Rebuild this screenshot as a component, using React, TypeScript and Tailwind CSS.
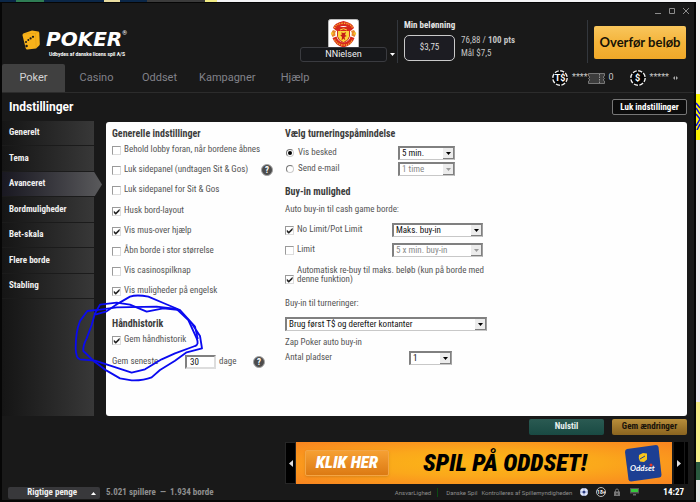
import { ReactNode, useId, useState } from "react";
import { clsx } from "clsx";

const tabs = ["Poker", "Casino", "Oddset", "Kampagner", "Hjælp"];

const sections = [
  "Generelt",
  "Tema",
  "Avanceret",
  "Bordmuligheder",
  "Bet-skala",
  "Flere borde",
  "Stabling",
];

const lobbyOptions = [
  { label: "Behold lobby foran, når bordene åbnes", checked: false },
  { label: "Luk sidepanel (undtagen Sit & Gos)", checked: false, help: true },
  { label: "Luk sidepanel for Sit & Gos", checked: false },
];

const tableOptions = [
  { label: "Husk bord-layout", checked: true },
  { label: "Vis mus-over hjælp", checked: true },
  { label: "Åbn borde i stor størrelse", checked: false },
  { label: "Vis casinospilknap", checked: false },
  { label: "Vis muligheder på engelsk", checked: true },
];

function Checkbox({
  label,
  defaultChecked,
  className,
}: {
  label: string;
  defaultChecked?: boolean;
  className?: string;
}) {
  return (
    <label className={clsx("flex items-center gap-[3px]", className)}>
      <span className="relative size-[9px] shrink-0">
        <input
          type="checkbox"
          defaultChecked={defaultChecked}
          className="peer block size-[9px] appearance-none border border-t-[#9a9a9a] border-r-[#dcdcdc] border-b-[#dcdcdc] border-l-[#9a9a9a] bg-white"
        />
        <svg
          viewBox="0 0 9 9"
          className="pointer-events-none absolute inset-0 hidden size-[9px] peer-checked:block"
        >
          <path d="M1.800 3.800v2.200l2 1.800L7.600 4V1.800L3.800 5.500z" fill="#222" />
        </svg>
      </span>
      <span>{label}</span>
    </label>
  );
}

function Radio({
  label,
  defaultChecked,
}: {
  label: string;
  defaultChecked?: boolean;
}) {
  return (
    <label className="flex items-center gap-1">
      <span className="relative ml-px size-2 shrink-0">
        <input
          type="radio"
          name="reminder"
          defaultChecked={defaultChecked}
          className="peer block size-2 appearance-none rounded-full border border-t-[#777] border-r-[#ccc] border-b-[#ccc] border-l-[#777] bg-white"
        />
        <span className="pointer-events-none absolute inset-[2px] hidden rounded-full bg-black peer-checked:block" />
      </span>
      <span>{label}</span>
    </label>
  );
}

function Select({
  label,
  value,
  disabled,
  className,
}: {
  label: string;
  value: string;
  disabled?: boolean;
  className?: string;
}) {
  return (
    <span
      className={clsx(
        "relative block h-[14px] border-t-2 border-r border-b border-l-2 border-t-[#808080] border-r-[#a0a0a0] border-b-[#c8c8c8] border-l-[#808080] bg-white",
        className,
      )}
    >
      <select
        aria-label={label}
        disabled={disabled}
        className={clsx(
          "block h-full w-full appearance-none pl-[2px] text-[9px] leading-[11px]",
          disabled ? "text-[#8a8a8a]" : "text-[#111]",
        )}
      >
        <option>{value}</option>
      </select>
      <span className="pointer-events-none absolute inset-y-0 right-0 flex w-[11px] items-center justify-center border-r border-b border-[#808080] bg-[#ececec]">
        <svg viewBox="0 0 5 3" className="h-[3px] w-[5px]">
          <path d="M0 0h5L2.500 3z" fill={disabled ? "#999" : "#000"} />
        </svg>
      </span>
    </span>
  );
}

function HelpButton({ className }: { className?: string }) {
  return (
    <button
      type="button"
      aria-label="Hjælp"
      className={clsx(
        "flex size-3 items-center justify-center rounded-full border border-[#a5a5a5] bg-[#4c4c4c] text-[9px] leading-none font-bold text-white",
        className,
      )}
    >
      ?
    </button>
  );
}

function Heading({ children }: { children: ReactNode }) {
  return (
    <h2 className="h-3 text-[10px] leading-3 font-bold text-[#3c3c3c]">
      {children}
    </h2>
  );
}

function Logo() {
  return (
    <div className="flex items-start gap-1.5 pt-[11px] pl-5">
      <svg viewBox="0 0 18 20" className="h-5 w-[18px]">
        <path
          d="M2 3.200 10 .6l6.200.9q1 .2 1.100 1.200l.5 11.300q0 1-.8 1.700l-3 2.700-8.500 1q-1.500.1-1.800-1.200L.5 5.200Q.4 3.800 2 3.200z"
          fill="#f9b31a"
        />
        <path d="m1.500 4 12-.8 3.500-1.200M13.500 3.200l.7 15" stroke="#dd9a12" strokeWidth=".5" fill="none" />
        <g fill="#191919">
          <circle cx="11" cy="6.800" r="1.100" />
          <circle cx="8.600" cy="8.400" r="1.100" />
          <circle cx="6.300" cy="10" r="1" />
          <circle cx="4" cy="12" r="1" />
          <circle cx="4.600" cy="16" r="1.200" />
        </g>
      </svg>
      <div className="text-white">
        <div className="flex items-start">
          <span className="font-['DejaVu_Sans',sans-serif] text-[20px] leading-[18px] font-bold italic">
            POKER
          </span>
          <span className="text-[6px] leading-[6px]">®</span>
        </div>
        <p className="mt-[3px] pl-[3px] text-[5px] leading-[6px] font-bold">
          Udbydes af danske licens spil A/S
        </p>
      </div>
    </div>
  );
}

function Crest() {
  return (
    <svg viewBox="0 0 31 29" className="h-[29px] w-[31px]">
      <rect x=".5" y=".5" width="30" height="30" rx="2" fill="#fff" stroke="#bbb" />
      <path
        d="M5 9Q6 4 15.500 2 25 4 26 9l-3.500 3Q20 7 15.500 7T8.500 12z"
        fill="#d8281c"
      />
      <path
        d="M4.500 19Q7 26.500 15.500 28.500 24 26.500 26.500 19L22.500 17.500Q21 23 15.500 23.500 10 23 8.500 17.500z"
        fill="#d8281c"
      />
      <path
        d="M6.500 9Q8 4.500 15.500 4.300T24.500 9"
        fill="none"
        stroke="#f6b42c"
        strokeWidth="1.500"
        strokeDasharray="1.200 1"
      />
      <path
        d="M6.500 20.500Q9 25.500 15.500 26T24.500 20.500"
        fill="none"
        stroke="#f6b42c"
        strokeWidth="1.500"
        strokeDasharray="1.200 1"
      />
      <path d="M5 11q-3 3.500-.5 7l3-1.500q-1-2.500.5-4.500zM26 11q3 3.500.5 7l-3-1.500q1-2.500-.5-4.500z" fill="#e8862a" />
      <circle cx="4.200" cy="14.500" r="1.300" fill="#f6c52c" />
      <circle cx="26.800" cy="14.500" r="1.300" fill="#f6c52c" />
      <path d="M9.500 8.500h12v9q-1 4.500-6 6-5-1.500-6-6z" fill="#fbd43a" stroke="#c41d16" strokeWidth=".9" />
      <path d="M9.500 8.500h12v3.500h-12z" fill="#d8281c" />
      <path d="M12 11q3.500-2.500 7 0" stroke="#fbd43a" strokeWidth="1" fill="none" />
      <path d="m13 13.500 3 .5 2-1-1 3 1.800 1-2.300 1 .8 3.500-1.800-2-2 2 .5-3.500-1.800-2 2-.5z" fill="#c41d16" />
    </svg>
  );
}

function Chip({ children }: { children: ReactNode }) {
  return (
    <span className="relative flex size-4 items-center justify-center text-[9px] leading-none font-bold text-white">
      <svg viewBox="0 0 16 16" className="absolute inset-0 size-4">
        <circle cx="8" cy="8" r="7.800" fill="#050505" />
        <circle
          cx="8"
          cy="8"
          r="7.200"
          fill="none"
          stroke="#eee"
          strokeWidth="1.400"
          strokeDasharray="4.200 1.450"
        />
      </svg>
      <span className="relative">{children}</span>
    </span>
  );
}

function Ticket() {
  return (
    <svg viewBox="0 0 17 11" className="h-[11px] w-[17px]">
      <path
        d="M.5.5h16V3L15 4l1.500 1.500L15 7l1.500 1v2.500H.5V8L2 7 .5 5.500 2 4 .5 3z"
        fill="#3c3c3c"
        stroke="#8a8a8a"
        strokeWidth=".8"
      />
      <path d="M11.500 1v9" stroke="#aaa" strokeWidth=".8" strokeDasharray="1.500 1" />
    </svg>
  );
}

function PenMark() {
  return (
    <svg
      viewBox="-30 60 411 285"
      className="pointer-events-none absolute -top-7 -left-[42px] z-10 h-[95px] w-[137px]"
      fill="none"
      stroke="#0a0af0"
      strokeWidth="5.500"
      strokeLinecap="round"
      strokeLinejoin="round"
    >
      <path d="M48 133 80 124 115 100 150 80Q170 73 205 80L250 99 300 120 335 160 360 198 366 235 320 247 285 272 240 300 215 322Q190 332 155 331L120 325 80 302 40 272 10 243Q8 228 20 205L35 165 45 130 60 104 110 98 150 104 200 125 250 115 300 120 345 170 353 205" />
      <path d="M0 153 22 123 60 119 110 112 230 110 290 117 325 150 350 205Q358 224 345 228L285 250 245 268 195 298 155 308 100 290 45 272 0 268Q-12 266-13 235-13 185 0 153z" />
    </svg>
  );
}

function OddsetBadge() {
  return (
    <svg viewBox="0 0 38 38" className="h-[38px] w-[38px]">
      <path d="M3 5 32 1q2 0 2.500 2l3 28q0 2-2 2.500L7 37.500q-2 0-2.500-2L1 8q0-2.500 2-3z" fill="#1d3f93" />
      <path d="m15 11 4-2 4 .5v6l-3 2.500-4-.5q-2-3-1-6.500z" fill="#f8c51c" />
      <path d="m16 15 5-3" stroke="#1d3f93" strokeWidth="1" />
      <circle cx="27" cy="21" r="1.500" fill="#e8382a" />
      <text
        x="6"
        y="27"
        fill="#fff"
        fontSize="8"
        fontWeight="700"
        fontStyle="italic"
        fontFamily="Lato, sans-serif"
      >
        Oddset
      </text>
    </svg>
  );
}

function Header() {
  return (
    <header className="flex h-[45px]">
      <div className="flex-1">
        <Logo />
      </div>

      <div className="flex w-[97px] items-end pb-[2px]">
        <div className="flex flex-col items-center">
          <Crest />
          <button
            type="button"
            className="-mt-px h-[15px] w-[87px] rounded-[3px] border border-[#3a3b40] bg-[#17181b] text-[9px] leading-[13px] text-[#f2f2f2]"
          >
            NNielsen
          </button>
        </div>
        <svg viewBox="0 0 5 3" className="mb-1.5 ml-[3px] h-[3px] w-[5px]">
          <path d="M0 0h5L2.500 3z" fill="#fff" />
        </svg>
      </div>

      <div className="my-px flex w-[190px] flex-col border-l border-[#33373d] pl-1.5 font-['Roboto_Condensed','Roboto',sans-serif]">
        <p className="text-[9px] leading-[11px] font-bold text-[#e4e4e4]">
          Min belønning
        </p>
        <div className="mt-1 flex gap-1.5">
          <div className="flex h-[26px] w-[51px] items-center justify-center rounded-[5px] border border-[#c9c9c9] bg-[#1c1c22] text-[9px] text-[#ddd]">
            $3,75
          </div>
          <div className="text-[9px] leading-[13px] text-[#c4c4c4]">
            <p className="-mt-px">
              76,88 / <strong>100 pts</strong>
            </p>
            <p>Mål $7,5</p>
          </div>
        </div>
      </div>

      <div className="my-px border-l border-[#33373d] pl-1.5">
        <button
          type="button"
          className="mt-1.5 h-[33px] w-[92px] rounded-[2px] bg-linear-to-b from-[#f8c65c] via-[#f4b43a] to-[#f0a828] font-['Lato',sans-serif] text-[13px] font-bold text-[#161206]"
        >
          Overfør beløb
        </button>
      </div>
      <div className="w-2" />
    </header>
  );
}

function TabBar() {
  const [active, setActive] = useState("Poker");

  return (
    <div className="flex border-b border-[#2c2c2c]">
      <nav className="flex">
        {tabs.map((tab) => (
          <button
            key={tab}
            type="button"
            onClick={() => setActive(tab)}
            className={clsx(
              "h-7 min-w-[63px] rounded-t-[2px] px-2 text-[11px]",
              tab === active ? "bg-[#404040] text-[#d4d4d4]" : "text-[#82828a]",
            )}
          >
            {tab}
          </button>
        ))}
      </nav>
      <div className="ml-auto flex items-center pr-4 text-[9px] text-[#c8c8c8]">
        <Chip>T$</Chip>
        <span className="ml-1">****</span>
        <Ticket />
        <span className="ml-1">0</span>
        <span className="ml-4">
          <Chip>$</Chip>
        </span>
        <span className="ml-1">*****</span>
        <svg viewBox="0 0 5 4" className="ml-1 h-1 w-[5px]">
          <path d="M2 0v4L0 2zM3 0v4l2-2z" fill="#aaa" />
        </svg>
      </div>
    </div>
  );
}

function Sidebar() {
  const [active, setActive] = useState("Avanceret");

  return (
    <aside className="w-[92px] bg-linear-to-r from-[#151515] to-[#383838]">
      <nav className="flex h-[178px] flex-col">
        {sections.map((section) => (
          <button
            key={section}
            type="button"
            onClick={() => setActive(section)}
            className={clsx(
              "flex-1 border-b border-[#1b1b1b] pl-[7px] text-left text-[9px] font-bold text-[#efefef]",
              section === active
                ? "w-[100px] bg-linear-to-r from-[#191821] to-[#5a5a5c] [clip-path:polygon(0_0,92%_0,100%_50%,92%_100%,0_100%)]"
                : "w-full",
            )}
          >
            {section}
          </button>
        ))}
      </nav>
    </aside>
  );
}

function GeneralColumn() {
  const daysId = useId();

  return (
    <div className="w-[173px]">
      <Heading>Generelle indstillinger</Heading>
      <div>
        {lobbyOptions.map((option) => (
          <div key={option.label} className="flex h-5 items-center pr-3">
            <Checkbox label={option.label} defaultChecked={option.checked} />
            {option.help ? <HelpButton className="ml-auto" /> : null}
          </div>
        ))}
      </div>
      <div className="mt-px">
        {tableOptions.map((option) => (
          <Checkbox
            key={option.label}
            label={option.label}
            defaultChecked={option.checked}
            className="h-5"
          />
        ))}
      </div>

      <section className="relative mt-[17px]">
        <PenMark />
        <Heading>Håndhistorik</Heading>
        <Checkbox label="Gem håndhistorik" defaultChecked className="h-5" />
        <div className="mt-0.5 flex h-5 items-center pr-5">
          <label htmlFor={daysId} className="w-[73px]">
            Gem seneste
          </label>
          <input
            id={daysId}
            defaultValue="30"
            className="h-[14px] w-[31px] border-2 border-t-[#808080] border-r-[#ddd] border-b-[#ddd] border-l-[#808080] bg-white pl-[3px] text-[9px] text-[#111]"
          />
          <span className="ml-[3px]">dage</span>
          <HelpButton className="ml-auto" />
        </div>
      </section>
    </div>
  );
}

function TournamentColumn() {
  return (
    <div className="w-[202px]">
      <Heading>Vælg turneringspåmindelse</Heading>
      <div className="mt-[5px] pr-8">
        <div className="flex h-4 items-center justify-between">
          <Radio label="Vis besked" defaultChecked />
          <Select label="Vis besked" value="5 min." className="w-[57px]" />
        </div>
        <div className="flex h-4 items-center justify-between">
          <Radio label="Send e-mail" />
          <Select label="Send e-mail" value="1 time" disabled className="w-[57px]" />
        </div>
      </div>

      <div className="mt-[9px]">
        <Heading>Buy-in mulighed</Heading>
      </div>
      <p className="mt-[3px] leading-4">Auto buy-in til cash game borde:</p>
      <div className="mt-[3px] pr-1">
        <div className="flex h-5 items-center justify-between">
          <Checkbox label="No Limit/Pot Limit" defaultChecked />
          <Select label="No Limit/Pot Limit" value="Maks. buy-in" className="w-[91px]" />
        </div>
        <div className="flex h-5 items-center justify-between">
          <Checkbox label="Limit" />
          <Select label="Limit" value="5 x min. buy-in" disabled className="w-[91px]" />
        </div>
      </div>
      <Checkbox
        label="Automatisk re-buy til maks. beløb (kun på borde med denne funktion)"
        defaultChecked
        className="mt-1.5 items-end leading-[9px]"
      />

      <p className="mt-[11px] leading-4">Buy-in til turneringer:</p>
      <Select
        label="Buy-in til turneringer"
        value="Brug først T$ og derefter kontanter"
        className="mt-1.5"
      />
      <p className="mt-[3px] leading-4">Zap Poker auto buy-in</p>
      <div className="flex h-4 items-center justify-between pr-[35px]">
        <span>Antal pladser</span>
        <Select label="Antal pladser" value="1" className="w-[43px]" />
      </div>
    </div>
  );
}

function Banner() {
  return (
    <div className="mt-[7px] flex h-[42px] justify-end pr-1.5">
      <button
        type="button"
        aria-label="Forrige"
        className="flex w-[11px] items-center justify-center border border-[#262626] bg-black"
      >
        <svg viewBox="0 0 4 7" className="h-[7px] w-1">
          <path d="M4 0v7L0 3.500z" fill="#ddd" />
        </svg>
      </button>
      <div className="flex w-[376px] items-center bg-[radial-gradient(ellipse_at_center,#fcb716_0%,#fba81b_45%,#f98420_100%)] pl-[9px] font-['Roboto_Condensed','Liberation_Sans_Narrow',sans-serif] italic">
        <a
          href="#klik"
          className="flex h-[26px] w-[84px] items-center justify-center rounded-[2px] border border-[#f3a545] bg-linear-to-b from-[#f6a032] to-[#dc7a12] text-[17px] font-black text-white shadow-sm"
        >
          KLIK HER
        </a>
        <p className="ml-[34px] flex-1 text-[24px] leading-none font-black whitespace-nowrap text-black">
          SPIL PÅ ODDSET!
        </p>
        <div className="mr-2.5">
          <OddsetBadge />
        </div>
      </div>
      <button
        type="button"
        aria-label="Næste"
        className="ml-0.5 flex w-[10px] items-center justify-center bg-black"
      >
        <svg viewBox="0 0 4 7" className="h-[7px] w-1">
          <path d="M0 0v7l4-3.500z" fill="#ddd" />
        </svg>
      </button>
      <div className="ml-px w-[3px] bg-black" />
    </div>
  );
}

function StatusBar() {
  return (
    <footer className="flex h-4 items-center pr-2.5 pl-1.5 text-[#8e8e8e]">
      <button
        type="button"
        className="mt-0.5 flex h-3 w-[92px] items-center justify-end gap-3.5 rounded-[2px] bg-[#38383b] pr-1 font-['Roboto_Condensed','Roboto',sans-serif] text-[9px] font-bold text-[#f0f0f0]"
      >
        Rigtige penge
        <svg viewBox="0 0 5 3" className="h-[3px] w-[5px]">
          <path d="M0 3h5L2.500 0z" fill="#fff" />
        </svg>
      </button>
      <p className="mt-0.5 ml-1.5 font-['Roboto_Condensed','Roboto',sans-serif] text-[9px] font-bold">
        5.021 spillere&nbsp; —&nbsp; 1.934 borde
      </p>
      <div className="ml-auto flex items-center text-[6px]">
        <span>AnsvarLighed</span>
        <span className="ml-1.5 h-[9px] w-px bg-[#0c4a12]" />
        <span className="ml-2">Danske Spil</span>
        <span className="ml-1">Kontrolleres af Spillemyndigheden</span>
        <svg viewBox="0 0 8 8" className="ml-2 size-2">
          <circle cx="4" cy="4" r="4" fill="#dfe6fb" />
          <circle cx="4" cy="4" r="1.600" fill="#27387c" />
          <path d="M4 0v1.500M4 6.500V8M0 4h1.500M6.500 4H8" stroke="#5a6cb4" strokeWidth=".8" />
        </svg>
        <span className="ml-2 flex size-[10px] items-center justify-center rounded-full border border-[#bbb] text-[5px] leading-none font-bold text-white">
          18+
        </span>
        <svg viewBox="0 0 6 8" className="ml-2 h-2 w-1.5">
          <path d="M1.500 4V2.500a1.500 1.500 0 0 1 3 0V4" fill="none" stroke="#777" />
          <path d="M0 3.500h6V8H0z" fill="#777" />
          <path d="M3 5v2" stroke="#222" />
        </svg>
        <svg viewBox="0 0 9 8" className="ml-2.5 h-2 w-[9px]">
          <path d="M0 0h9v5.500H0z" fill="#555" />
          <path d="M1 1h7v3H1z" fill="#35c93c" />
          <path d="M3 6h3v1.500H3z" fill="#666" />
        </svg>
      </div>
      <time className="mt-0.5 ml-6 font-['Roboto_Condensed','Roboto',sans-serif] text-[9px] font-bold text-white">
        14:27
      </time>
    </footer>
  );
}

export default function App() {
  return (
    <div className="flex min-h-screen flex-col bg-[#efeff2] font-['Roboto',sans-serif]">
      <div className="flex h-0.5">
        <div className="w-4 bg-[#0b2748]" />
        <div className="w-7 bg-[#2f7d54]" />
        <div className="w-[60px] bg-[#0b2748]" />
        <div className="w-4 bg-[#e8dca0]" />
        <div className="w-[27px] bg-[#0b2748]" />
        <div className="w-[58px] bg-[#3b3b3b]" />
        <div className="w-3 bg-[#f1ec84]" />
        <div className="flex-1 bg-[#f4f4f6]" />
      </div>

      <div className="flex flex-1">
        <div className="flex min-w-0 flex-1 flex-col border-x-2 border-t border-b-2 border-[#060606] bg-[#191919]">
          <div className="flex h-4 items-center justify-end gap-2 pr-[5px] text-[#8c8c8c]">
            <button type="button" aria-label="Minimer">
              <svg viewBox="0 0 6 6" className="size-1.5" stroke="currentColor" fill="none">
                <path d="M0 5.500h6" />
              </svg>
            </button>
            <button type="button" aria-label="Maksimer">
              <svg viewBox="0 0 6 6" className="size-1.5" stroke="currentColor" fill="none">
                <path d="M.5.5h5v5h-5z" />
              </svg>
            </button>
            <button type="button" aria-label="Luk">
              <svg viewBox="0 0 6 6" className="size-1.5" stroke="currentColor" fill="none">
                <path d="m0 0 6 6M6 0 0 6" />
              </svg>
            </button>
          </div>

          <Header />
          <TabBar />

          <div className="flex h-7 items-center justify-between pr-[7px] pl-[7px]">
            <h1 className="text-[12px] font-bold text-white">Indstillinger</h1>
            <button
              type="button"
              className="h-4 w-[75px] rounded-[2px] border border-[#777] bg-[#0c0c0c] font-['Roboto_Condensed','Roboto',sans-serif] text-[9px] leading-[14px] font-bold text-white"
            >
              Luk indstillinger
            </button>
          </div>

          <div className="flex flex-1 font-['Roboto_Condensed','Roboto',sans-serif]">
            <Sidebar />
            <main className="mt-px mr-[7px] ml-3 flex flex-1 rounded-[3px] bg-[#fefefe] px-1.5 pt-1.5 pb-2 text-[9px] text-[#555]">
              <GeneralColumn />
              <TournamentColumn />
            </main>
          </div>

          <div className="mt-[3px] flex justify-end gap-2 pr-[7px] font-['Roboto_Condensed','Roboto',sans-serif] text-[9px] font-bold">
            <button
              type="button"
              className="h-4 w-[75px] rounded-[2px] bg-linear-to-b from-[#2a5a52] to-[#194a43] text-[#e8f0ee]"
            >
              Nulstil
            </button>
            <button
              type="button"
              className="h-4 w-[75px] rounded-[2px] bg-linear-to-b from-[#b88e3a] to-[#8a6420] text-[#18120a]"
            >
              Gem ændringer
            </button>
          </div>

          <Banner />
          <StatusBar />
        </div>

        {/* sliver of the desktop behind the window */}
        <div className="flex w-1 flex-col">
          <div className="h-[92px] bg-[#f4f4f4]" />
          <div className="h-[46px] bg-[#fbf40a] pt-2">
            <svg viewBox="0 0 4 28" className="h-7 w-1" fill="none" stroke="#0a0af0" strokeWidth="1.500">
              <path d="M0 1 4 6M0 6l4 6M0 12l4 5M4 17 0 24M4 22 1 28" />
            </svg>
          </div>
          <div className="flex-1 bg-[#ececf0]" />
          <div className="h-[60px] bg-[#f7ee8c]" />
          <div className="h-[18px] bg-[#2c5a40]" />
          <div className="h-[22px] bg-[#e6e6e6]" />
        </div>
      </div>
    </div>
  );
}
